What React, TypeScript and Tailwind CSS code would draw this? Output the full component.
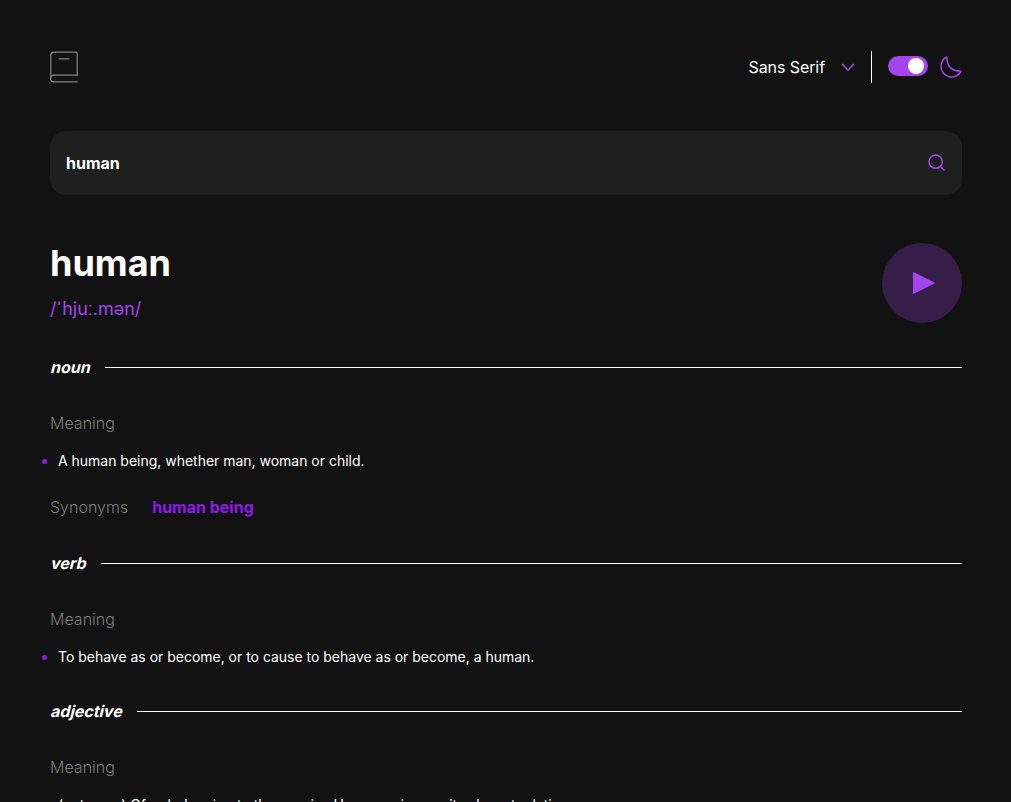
import React from "react";

type Entry = { part: string; meanings: string[]; synonyms?: string[] };

const entries: Entry[] = [
  {
    part: "noun",
    meanings: ["A human being, whether man, woman or child."],
    synonyms: ["human being"],
  },
  {
    part: "verb",
    meanings: ["To behave as or become, or to cause to behave as or become, a human."],
  },
  {
    part: "adjective",
    meanings: ["(notcomp) Of or belonging to the species Homo sapiens or its closest relatives."],
  },
];

function Header() {
  return (
    <header className="flex h-8 items-center justify-between">
      <svg width="28" height="32" viewBox="0 0 34 38" fill="none" stroke="#838383" strokeWidth="1.5" strokeLinecap="round">
        <path d="M1 33V4.5A3.5 3.5 0 0 1 4.5 1h26.8A1.7 1.7 0 0 1 33 2.7v26.594" />
        <path d="M4.5 29H33M4.5 37H33" />
        <path strokeLinejoin="round" d="M4.5 37a4 4 0 1 1 0-8" />
        <path d="M11 9h12" />
      </svg>
      <div className="flex h-8 items-center">
        <span className="mr-4 text-base tracking-[-0.08px]">Sans Serif</span>
        <svg width="14" height="8" viewBox="0 0 14 8" fill="none" stroke="#A445ED" strokeWidth="1.5">
          <path d="m1 1 6 6 6-6" />
        </svg>
        <span className="mx-4 h-8 w-px bg-white" />
        <span className="mr-3 mb-0.5 flex h-5 w-10 items-center justify-end rounded-full bg-[#A445ED] pr-1">
          <span className="h-4 w-4 rounded-full bg-white" />
        </span>
        <svg width="22" height="22" viewBox="0 0 22 22" fill="none" stroke="#A445ED" strokeWidth="1.5" strokeLinejoin="round" strokeLinecap="round">
          <path d="M1 10.449a10.544 10.544 0 0 0 19.993 4.686C11.544 15.135 6.858 10.448 6.858 1A10.545 10.545 0 0 0 1 10.449Z" />
        </svg>
      </div>
    </header>
  );
}

function SearchBar() {
  return (
    <div className="mt-12 flex h-16 items-center justify-between rounded-2xl bg-[#1f1f1f] px-4">
      <span className="text-base font-bold">human</span>
      <svg width="18" height="18" viewBox="0 0 18 18" fill="none" stroke="#A445ED" strokeWidth="1.5">
        <path d="m12.663 12.663 3.887 3.887M1 7.664a6.665 6.665 0 1 0 13.33 0 6.665 6.665 0 0 0-13.33 0Z" />
      </svg>
    </div>
  );
}

function Definition({ entry }: { entry: Entry }) {
  return (
    <section>
      <div className="flex h-6 items-center gap-[15.5px]">
        <h2 className="origin-[0_18px] -skew-x-[14deg] text-base font-bold">{entry.part}</h2>
        <span className="h-px flex-1 bg-white" />
      </div>
      <h3 className="mt-8 text-base font-light text-[#7d7d7d]">Meaning</h3>
      <ul className="mt-4">
        {entry.meanings.map((m) => (
          <li key={m} className="-ml-2 flex h-5 items-center gap-[11px] text-sm tracking-[-0.015px] whitespace-nowrap">
            <span className="h-[5px] w-[5px] rounded-full bg-[#8F19E8]" />
            {m}
          </li>
        ))}
      </ul>
      {entry.synonyms && (
        <div className="mt-6 flex h-6 items-center gap-6 text-base">
          <h3 className="font-light text-[#7d7d7d]">Synonyms</h3>
          <span className="font-bold text-[#8F19E8]">{entry.synonyms.join(", ")}</span>
        </div>
      )}
    </section>
  );
}

export default function App() {
  return (
    <main className="h-[802px] overflow-hidden bg-[#121212] px-[50px] pt-[51px] font-['Inter',sans-serif] text-white">
      <div className="w-[912px]">
        <Header />
        <SearchBar />
        <div className="mt-12 flex h-20 items-center justify-between">
          <div>
            <h1 className="text-4xl font-bold">human</h1>
            <p className="mt-3 text-lg text-[#A445ED]">
              /<span className="pr-[1.5px] pl-px">ˈ</span>hjuː.mən/
            </p>
          </div>
          <svg width="80" height="80" viewBox="0 0 75 75" fill="#A445ED">
            <circle cx="37.5" cy="37.5" r="37.5" opacity=".25" />
            <path d="M29 27v21l21-10.5z" />
          </svg>
        </div>
        <div className="mt-8 flex flex-col gap-8">
          {entries.map((e) => (
            <Definition key={e.part} entry={e} />
          ))}
        </div>
      </div>
    </main>
  );
}
